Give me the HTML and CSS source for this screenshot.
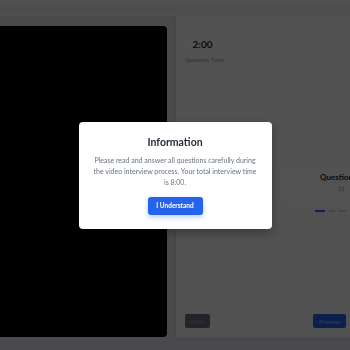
FILE: index.html
```html
<!DOCTYPE html>
<html lang="en">
<head>
<meta charset="UTF-8" />
<meta name="viewport" content="width=device-width, initial-scale=1" />
<title>Video Interview</title>
<link rel="stylesheet" href="styles.css">
</head>
<body>
  <header class="topbar"></header>

  <main class="main">
    <div class="video"></div>

    <section class="panel">
      <div class="timer">2:00</div>
      <p class="timer-label">Question Time</p>

      <div class="questions">
        <div class="qcard">
          <strong>Question</strong>
          <span>21</span>
        </div>
      </div>
      <div class="steps">
        <span class="step active"></span>
        <span class="step"></span>
        <span class="step"></span>
      </div>

      <div class="actions">
        <button class="btn btn-next">Next</button>
        <button class="btn btn-preview">Preview</button>
      </div>
    </section>
  </main>

  <div class="overlay">
    <div class="modal">
      <h2>Information</h2>
      <p>Please read and answer all questions carefully during the video interview process. Your total interview time is 8:00.</p>
      <button class="btn-ok">I Understand</button>
    </div>
  </div>
</body>
</html>
```

FILE: styles.css
```css
* {
  box-sizing: border-box;
}
body {
  margin: 0;
  background: #e5e7eb;
  font-family: Lato, 'Noto Sans', sans-serif;
  color: #1f2937;
  height: 350px;
  overflow: hidden;
}
/* Cabeçalho */
.topbar {
  height: 16px;
  background: #eceef1;
  border-bottom: 2px solid #f4f5f7;
  box-shadow: inset 0 1px 0 #ffffff, inset 0 4px 0 #f7f7f8;
}
/* Conteúdo */
.main {
  display: flex;
  align-items: flex-start;
  gap: 9px;
}
.video {
  width: 167px;
  height: 311px;
  margin-top: 10px;
  background: #000;
  border-radius: 0 4px 4px 0;
  flex-shrink: 0;
}
.panel {
  flex: 1;
  height: 322px;
  background: #fafafa;
  padding: 20px 4px 10px 9px;
  display: flex;
  flex-direction: column;
  overflow: hidden;
  box-shadow: 0 1px 3px rgba(0, 0, 0, 0.12);
}
.timer {
  width: 35px;
  height: 16px;
  background: #fff;
  border-radius: 3px;
  font-size: 10px;
  font-weight: 700;
  line-height: 16px;
  text-align: center;
}
.timer-label {
  margin: 4px 0 0;
  font-size: 6px;
  color: #9ca3af;
}
.questions {
  margin-top: 101px;
  margin-left: 88px;
}
.qcard {
  width: 130px;
  height: 42px;
  background: #fff;
  border-radius: 4px;
  padding: 8px 0 0 47px;
  display: flex;
  flex-direction: column;
  font-size: 8px;
}
.qcard span {
  margin-top: 3px;
  padding-left: 18px;
  font-size: 6px;
  color: #9ca3af;
}
.steps {
  margin: 4px 0 0 130px;
  display: flex;
  gap: 3px;
}
.step {
  width: 10px;
  height: 2px;
  background: #d1d5db;
  border-radius: 1px;
}
.step.active {
  width: 13px;
  background: #2563eb;
}
.actions {
  margin-top: auto;
  display: flex;
  justify-content: space-between;
}
.btn {
  height: 14px;
  border: none;
  border-radius: 2px;
  font-family: inherit;
  font-size: 6px;
  padding: 0 5px;
  color: #e5e7eb;
}
.btn-next {
  width: 25px;
  background: #6b7280;
  color: #9ca3af;
}
.btn-preview {
  width: 33px;
  background: #2563eb;
  color: #93c5fd;
}
/* Modal */
.overlay {
  position: fixed;
  inset: 0;
  background: rgba(0, 0, 0, 0.68);
  display: flex;
  align-items: center;
  justify-content: center;
}
.modal {
  width: 193px;
  height: 107px;
  background: #fff;
  border-radius: 4px;
  padding: 13px 12px 0;
  text-align: center;
  box-shadow: 0 4px 12px rgba(0, 0, 0, 0.3);
}
.modal h2 {
  margin: 0;
  font-size: 10.5px;
  font-weight: 700;
  color: #1f2937;
  line-height: 14px;
}
.modal p {
  margin: 6px 0 0;
  font-size: 7px;
  line-height: 11px;
  color: #6b7280;
}
.btn-ok {
  margin-top: 9px;
  width: 55px;
  height: 18px;
  border: none;
  border-radius: 3px;
  background: #2563eb;
  color: #fff;
  font-family: inherit;
  font-size: 6.5px;
  font-weight: 700;
  box-shadow: 0 2px 5px rgba(37, 99, 235, 0.35);
}
```
